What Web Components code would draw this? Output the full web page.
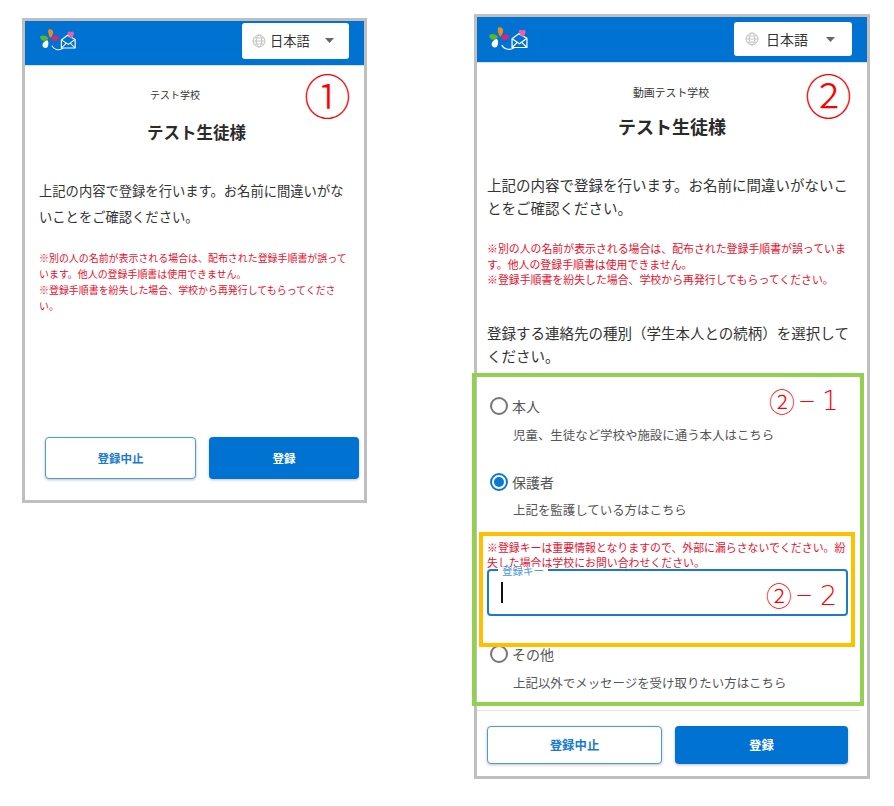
<!DOCTYPE html>
<html lang="ja"><head><meta charset="utf-8"><title>登録確認</title>
<style>
html,body{margin:0;background:#fff}
body{width:894px;height:806px;position:relative;overflow:hidden;font-family:"Noto Sans CJK JP","Noto Sans",sans-serif;color:#333}
</style></head><body>
<script>
const def=(name,css,html)=>{customElements.define(name,class extends HTMLElement{
  connectedCallback(){ if(this.shadowRoot) return; const r=this.attachShadow({mode:'open'}); r.innerHTML=`<style>${css}</style>${html}`; }
});};

def('x-logo',':host{display:block;line-height:0;align-self:center}',`<svg viewBox="0 0 40 24" style="display:block;width:var(--logo-w,38px);height:auto">
<path d="M9 .6c2.400-.8 4.800.4 4.800 3 0 2.200-1.300 4.200-2.800 5.800C9.400 8 7.800 3 9 .6z" fill="#f08a1c"/>
<path d="M0 8c2.600-2 6-1.600 9 1.400-1.500 2.300-3.500 3.400-5.700 3C1.500 12 .2 10 0 8z" fill="#5fb526"/>
<path d="M11.800 10.600c1.300-3 4.200-4.200 7.600-2.900.5 2.500-1 4.800-3.600 5-1.600.1-3.100-.8-4-2.100z" fill="#e6216f"/>
<path d="M7.800 11.800c1.500 1.700 1.500 4.700-.2 7.700-2.100 1-4.600.2-5-2-.4-2.400 2.100-5 5.200-5.700z" fill="#fff"/>
<path d="M12.500 17.500c1.500 4 7.500 5.800 12 2.700" fill="none" stroke="#fff" stroke-width="1.100"/>
<path d="M22.500 11.500 29 6.500l8 4.500v9H22.500z" fill="none" stroke="#fff" stroke-width="1.200" stroke-linejoin="round"/>
<path d="M22.500 11.500l7.300 4.800 7.200-5.300M22.500 20l5.500-5.500M37 20l-5.500-5.500" fill="none" stroke="#fff" stroke-width="1.100"/>
<path d="M29 3.800c1-1.700 2.600-1.100 3.200-.2.800-1.200 2.800-1.300 3.400.2.500 1.800-.6 3.900-2.500 5.800-2-1.200-4.100-3.300-4.100-5.800z" fill="#ec5fa4"/>
</svg>`);

def('x-lang',`:host{display:flex;align-items:center;box-sizing:border-box;background:#fff;border-radius:3px;height:var(--lang-h,36px);width:var(--lang-w,107px);padding-left:var(--lang-pl,10px);color:#333;font-size:var(--lang-fs,13.300px)}
svg{flex:none}.g{margin-right:var(--lang-gap,4px)}.t{flex:1}.a{margin-right:var(--lang-ar,15px)}`,
`<svg class="g" width="14" height="14" viewBox="0 0 14 14" fill="none" stroke="#c4c4c4" stroke-width="1"><circle cx="7" cy="7" r="6"/><ellipse cx="7" cy="7" rx="2.800" ry="6"/><path d="M1 7h12M1.800 4h10.400M1.800 10h10.400"/></svg><span class="t"><slot></slot></span><svg class="a" width="9" height="5" viewBox="0 0 9 5"><path d="M0 0h9L4.500 5z" fill="#666"/></svg>`);

def('x-header',`:host{display:flex;align-items:center;justify-content:space-between;box-sizing:border-box;height:var(--hdr-h,45px);background:#0072d2;padding:0 var(--hdr-pr,15px) var(--hdr-pb,5px) var(--hdr-pl,15px);border-bottom:1px solid #cfe3f6}`,
`<slot name="logo"></slot><slot name="lang"></slot>`);

def('x-btn',`:host{display:flex;align-items:center;justify-content:center;box-sizing:border-box;height:var(--btn-h,42px);border-radius:4px;font-size:var(--btn-fs,11.500px);font-weight:700;box-shadow:0 1px 3px rgba(0,0,0,.25)}
:host([kind=ghost]){background:#fff;border:1px solid #4a9ade;color:#1a7ad0}
:host([kind=primary]){background:#0072d2;color:#fff}`,`<slot></slot>`);

def('x-radio',`:host{display:flex;align-items:center;height:20px;font-size:14px;color:#555}
.c{box-sizing:border-box;width:18px;height:18px;border-radius:50%;border:2px solid #777;margin-right:4px;display:flex;align-items:center;justify-content:center;flex:none}
:host([checked]) .c{border-color:#0a78d6}
:host([checked]) .c::after{content:"";width:10px;height:10px;border-radius:50%;background:#0a78d6}`,
`<span class="c"></span><slot></slot>`);

def('x-keyfield',`:host{display:block;position:relative;box-sizing:border-box;height:47px;border:2px solid #1a7ad0;border-radius:4px}
.l{position:absolute;left:9px;top:-4px;padding:0 4px;background:#fff;font-size:10.500px;line-height:8px;color:#4a9ade}
.caret{position:absolute;left:12px;top:11px;width:1.500px;height:21px;background:#111}`,
`<span class="l"><slot></slot></span><span class="caret"></span>`);

def('x-note',`:host{position:absolute;color:#f00;white-space:nowrap;line-height:1}`,`<slot></slot>`);
def('x-frame',`:host{position:absolute;box-sizing:border-box;border-style:solid;pointer-events:none}`,``);

def('x-phone',`:host{position:absolute;box-sizing:border-box;display:flex;flex-direction:column;background:#fff;border:3px solid #bfbfbf;color:#333}
.b{flex:1;display:flex;flex-direction:column;min-height:0}`,`<slot name="header"></slot><div class="b"><slot></slot></div>`);

def('x-block',`:host{display:block;white-space:nowrap}`,`<slot></slot>`);
def('x-actions',`:host{display:grid;grid-template-columns:var(--act-a) var(--act-b);column-gap:13px}`,`<slot></slot>`);
</script>

<x-phone style="left:22px;top:18px;width:345px;height:485px">
  <x-header slot="header">
    <x-logo slot="logo"></x-logo>
    <x-lang slot="lang">日本語</x-lang>
  </x-header>
  <x-block style="margin-top:21px;font-size:10px;line-height:16px;text-align:center;padding-right:39px">テスト学校</x-block>
  <x-block style="margin-top:17px;font-size:16.500px;line-height:24px;font-weight:700;text-align:center;color:#2a2a2a;padding-left:4px">テスト生徒様</x-block>
  <x-block style="margin-top:34px;margin-left:14px;font-size:13.300px;line-height:26px">上記の内容で登録を行います。お名前に間違いがな<br>いことをご確認ください。</x-block>
  <x-block style="margin-top:20px;margin-left:14px;font-size:9.950px;line-height:16px;color:#e8102e">※別の人の名前が表示される場合は、配布された登録手順書が誤って<br>います。他人の登録手順書は使用できません。<br>※登録手順書を紛失した場合、学校から再発行してもらってくださ<br>い。</x-block>
  <x-actions style="margin:auto 0 21px 20px;--act-a:151px;--act-b:150px">
    <x-btn kind="ghost">登録中止</x-btn><x-btn kind="primary">登録</x-btn>
  </x-actions>
</x-phone>

<x-phone style="left:474px;top:14px;width:396px;height:765px">
  <x-header slot="header" style="--hdr-h:46px;--hdr-pb:1px;--hdr-pl:12px;--hdr-pr:15px;--logo-w:41px;--lang-w:118px;--lang-h:34px;--lang-pl:11px;--lang-fs:14px;--lang-gap:7px;--lang-ar:17px">
    <x-logo slot="logo"></x-logo>
    <x-lang slot="lang">日本語</x-lang>
  </x-header>
  <x-block style="margin-top:21px;font-size:10.900px;line-height:16px;text-align:center;padding-right:2px">動画テスト学校</x-block>
  <x-block style="margin-top:14px;font-size:18px;line-height:24px;font-weight:700;text-align:center;color:#2a2a2a">テスト生徒様</x-block>
  <x-block style="margin-top:35px;margin-left:10px;font-size:14.500px;line-height:23px">上記の内容で登録を行います。お名前に間違いがないこ<br>とをご確認ください。</x-block>
  <x-block style="margin-top:22px;margin-left:10px;font-size:10.900px;line-height:15.700px;color:#e8102e">※別の人の名前が表示される場合は、配布された登録手順書が誤っていま<br>す。他人の登録手順書は使用できません。<br>※登録手順書を紛失した場合、学校から再発行してもらってください。</x-block>
  <x-block style="margin-top:34px;margin-left:10px;font-size:14.500px;line-height:22.500px">登録する連絡先の種別（学生本人との続柄）を選択して<br>ください。</x-block>

  <x-radio style="margin-top:29px;margin-left:13px">本人</x-radio>
  <x-block style="margin-top:11px;margin-left:36px;font-size:12.450px;line-height:16px;color:#555">児童、生徒など学校や施設に通う本人はこちら</x-block>
  <x-radio checked style="margin-top:29px;margin-left:13px">保護者</x-radio>
  <x-block style="margin-top:10px;margin-left:36px;font-size:12.450px;line-height:16px;color:#555">上記を監護している方はこちら</x-block>
  <x-block style="margin-top:22px;margin-bottom:-1px;margin-left:10px;font-size:10.900px;line-height:15px;color:#e8102e">※登録キーは重要情報となりますので、外部に漏らさないでください。紛<br>失した場合は学校にお問い合わせください。</x-block>
  <x-keyfield style="margin-left:10px;margin-right:19px">登録キー</x-keyfield>
  <x-radio style="margin-top:28px;margin-left:13px">その他</x-radio>
  <x-block style="margin-top:11px;margin-left:36px;font-size:12.450px;line-height:16px;color:#555">上記以外でメッセージを受け取りたい方はこちら</x-block>
  <x-block style="margin-top:19px;height:1px;background:#e4e4e4;margin-right:7px"></x-block>
  <x-actions style="margin:15px 0 0 10px;--act-a:175px;--act-b:173px;--btn-h:38px;--btn-fs:12.400px">
    <x-btn kind="ghost">登録中止</x-btn><x-btn kind="primary">登録</x-btn>
  </x-actions>
</x-phone>

<x-frame style="left:472px;top:373px;width:392px;height:333px;border-width:4.500px;border-color:#92d050"></x-frame>
<x-frame style="left:479px;top:532px;width:376px;height:115px;border-width:4.500px;border-color:#ffc000"></x-frame>
<x-note style="left:304px;top:70px;font-size:47px;font-weight:200">①</x-note>
<x-note style="left:805px;top:70px;font-size:47px;font-weight:200">②</x-note>
<x-note style="left:769px;top:388px;font-size:26px;font-weight:300">②</x-note>
<x-note style="left:798px;top:391px;font-size:18px;font-weight:300">－</x-note>
<x-note style="left:822px;top:388px;font-size:26px;font-family:'DejaVu Sans';font-weight:200">1</x-note>
<x-note style="left:766px;top:582px;font-size:26px;font-weight:300">②</x-note>
<x-note style="left:795px;top:585px;font-size:18px;font-weight:300">－</x-note>
<x-note style="left:820px;top:582px;font-size:27px;font-family:'DejaVu Sans';font-weight:200">2</x-note>
</body></html>
